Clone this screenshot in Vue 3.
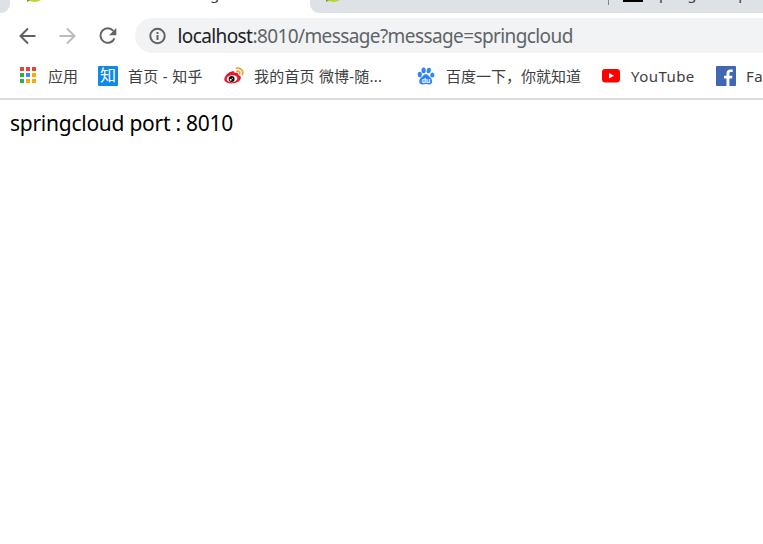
<script setup>
const dots = [
  ['#ea4335', '#ea4335', '#ea4335'],
  ['#34a853', '#4285f4', '#fbab05'],
  ['#34a853', '#fbab05', '#fbab05'],
]
</script>

<template>
  <div class="browser">
    <div class="tabs">
      <div class="edge"></div>
      <div class="tab active"><svg class="leaf" width="20" height="3" viewBox="0 0 20 3"><path d="M1 0h14q-3 2-7 2L4 1 1 2z" fill="#b9d433" /><path d="M1 0h3L1 2z" fill="#62a944" /></svg><span class="tail">g</span></div>
      <div class="tab rest">
        <svg class="leaf" width="20" height="3" viewBox="0 0 20 3"><path d="M1 0h14q-3 2-7 2L4 1 1 2z" fill="#b9d433" /><path d="M1 0h3L1 2z" fill="#62a944" /></svg>
        <i class="divider"></i><i class="black"></i><span class="title">springcloud p</span>
      </div>
    </div>
    <div class="toolbar">
      <svg class="nav" width="20" height="20" viewBox="0 0 20 20" fill="none" stroke="#5f6368" stroke-width="2"><path d="M17.500 10H3M10 2.500 2.500 10l7.500 7.500" /></svg>
      <svg class="nav" width="20" height="20" viewBox="0 0 20 20" fill="none" stroke="#babcbe" stroke-width="2"><path d="M1.500 10H16M9 2.500 16.500 10 9 17.500" /></svg>
      <svg class="nav" width="20" height="20" viewBox="0 0 20 20"><path d="M15.300 4.800A7.300 7.300 0 1 0 16.500 12.300" fill="none" stroke="#5f6368" stroke-width="2" /><path d="M18.300 2v7.200h-7.200z" fill="#5f6368" /></svg>
      <div class="address">
        <svg width="18" height="18" viewBox="0 0 18 18"><circle cx="8.500" cy="9" r="7.200" fill="none" stroke="#5f6368" stroke-width="2" /><path d="M7.500 8h2v5h-2zM7.500 5h2v2h-2z" fill="#5f6368" /></svg>
        <span class="url"><b>localhost</b>:8010/message?message=springcloud</span>
      </div>
    </div>
    <div class="bookmarks">
      <div class="mark">
        <svg width="20" height="20" viewBox="0 0 20 20"><template v-for="(row, r) in dots" :key="r"><rect v-for="(c, i) in row" :key="i" :x="2 + i * 6" :y="1 + r * 6" width="4" height="4" :fill="c" /></template></svg>
        <span>应用</span>
      </div>
      <div class="mark"><div class="zhihu">知</div><span class="home">首页 - 知乎</span></div>
      <div class="mark">
        <svg width="20" height="20" viewBox="0 0 20 20"><path d="M8 5.500c1.500-.8 3 0 2.600 1.700 2-.8 4-.5 3.700 1.800 2 .6 3.200 2 2.300 4-2.100 5.200-13.600 6-16.100 1.500C-.7 11 4.500 5.700 8 5.500" fill="#e6162d" /><ellipse cx="8" cy="12.700" rx="5.400" ry="3.500" transform="rotate(-7 8 12.700)" fill="#fff" /><circle cx="7.600" cy="12.900" r="3" fill="#111" /><circle cx="6.700" cy="13.700" r="1" fill="#fff" /><circle cx="8.500" cy="12.300" r=".5" fill="#fff" /><path d="M12.500 2.200c4-.9 7.300 2.500 6 6.500M13 5.200c2-.5 3.300 1 2.700 2.800" fill="none" stroke="#f79a1c" stroke-width="1.500" stroke-linecap="round" /></svg>
        <span class="weibo">我的首页 微博-随...</span>
      </div>
      <div class="mark">
        <svg width="20" height="20" viewBox="0 0 20 20" fill="#2f85f7"><ellipse cx="3.800" cy="8.500" rx="2.100" ry="2.700" /><ellipse cx="7.600" cy="4.400" rx="2.100" ry="2.800" /><ellipse cx="12.800" cy="4.500" rx="2.100" ry="2.800" transform="rotate(10 12.800 4.500)" /><ellipse cx="16.300" cy="9" rx="2.100" ry="2.500" /><path d="M10 8.200c2.300 0 2.800 2 4.500 3.500 2.500 2.100 2.300 6.300-.8 6.700-1.300.2-2.300-.3-3.700-.3s-2.800.6-4.300.3c-3.300-.8-3-4.600-.7-6.700C6.800 10.400 7.600 8.200 10 8.200" /><text x="5.800" y="16.800" class="du">du</text></svg>
        <span>百度一下，你就知道</span>
      </div>
      <div class="mark">
        <svg width="20" height="20" viewBox="0 0 20 20"><rect x="1" y="3" width="18" height="13.500" rx="3.200" fill="#f00" /><path d="m8 7 5 2.800-5 2.800z" fill="#fff" /></svg>
        <span class="yt">YouTube</span>
      </div>
      <div class="mark">
        <svg width="20" height="20" viewBox="0 0 20 20"><rect width="20" height="20" rx=".8" fill="#4267b2" /><path d="M10.500 20v-7.500H8V9.700h2.500V7.500c0-2.600 1.500-4.100 3.900-4.100l2.300.1V6H15c-1.300 0-1.600.6-1.600 1.600v2.100h3l-.4 2.800h-2.600V20z" fill="#fff" /></svg>
        <span class="yt">Facebook</span>
      </div>
    </div>
    <main>springcloud port : 8010</main>
  </div>
</template>

<style>
body { background: #fff; overflow: hidden; }
</style>
<style scoped>
.browser { width: 763px; height: 544px; overflow: hidden; font-family: "Noto Sans", "Noto Sans CJK SC", sans-serif; }
svg { display: block; flex: none; }
.tabs { display: flex; height: 13px; overflow: hidden; }
.edge { width: 10px; background: #dee1e6; border-bottom-right-radius: 9px; }
.tab { display: flex; height: 13px; font-size: 15px; line-height: 20px; color: #3c4043; }
.active { width: 300px; }
.active .leaf { margin-left: 16px; }
.rest { flex: 1; min-width: 0; background: #dee1e6; border-bottom-left-radius: 9px; }
.rest .leaf { margin-left: 15px; }
.tail { margin: -17px 0 0 164px; }
.divider { flex: none; width: 1px; height: 5px; margin-left: 263px; background: #80868b; }
.black { flex: none; width: 20px; height: 2px; margin-left: 14px; background: #000; }
.title { margin: -17px 0 0 9px; white-space: nowrap; letter-spacing: -.1px; }
.toolbar { display: flex; align-items: center; height: 45px; padding-left: 18px; box-sizing: border-box; }
.nav { margin-right: 20px; }
.address { display: flex; align-items: center; flex: 1; height: 35px; margin-left: -3px; padding-left: 14px; background: #f1f3f4; border-radius: 18px 0 0 18px; }
.url { margin-left: 10.500px; font-size: 19px; line-height: 34px; color: #5f6368; white-space: nowrap; letter-spacing: -.6px; }
.url b { color: #202124; font-weight: 400; }
.bookmarks { display: grid; grid-template-columns: 80px 126px 192px 185px 115px 47px; align-items: center; height: 42px; padding: 0 0 4px 18px; box-sizing: border-box; border-bottom: 2px solid #dadce0; }
.mark { display: flex; align-items: center; gap: 10px; min-width: 0; font-size: 15px; line-height: 22px; color: #3c4043; white-space: nowrap; }
.home { letter-spacing: .3px; }
.weibo { letter-spacing: .2px; }
.yt { letter-spacing: .45px; }
.zhihu { width: 20px; height: 20px; border-radius: 1px; background: #0f88eb; color: #fff; font-size: 16px; line-height: 19px; text-align: center; }
.du { font: bold 7px "Liberation Sans", sans-serif; fill: #fff; }
main { padding: 8px 10px; font-size: 21px; line-height: 30px; color: #000; letter-spacing: -.26px; }
</style>
